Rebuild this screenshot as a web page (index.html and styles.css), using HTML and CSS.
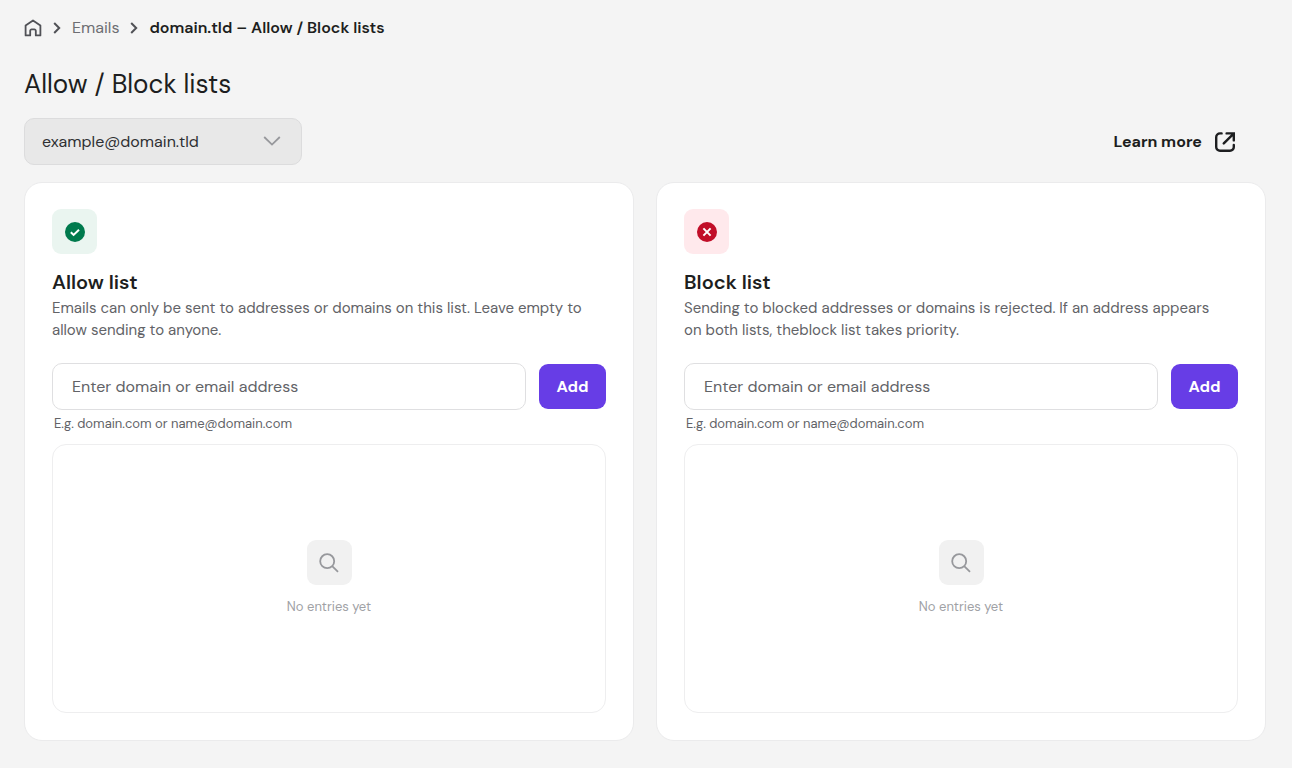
FILE: index.html
```html
<!DOCTYPE html>
<html lang="en">
<head>
    <meta charset="UTF-8">
    <meta name="viewport" content="width=device-width, initial-scale=1.0">
    <title>Allow / Block lists</title>
    <link rel="stylesheet" href="styles.css">
</head>
<body>
    <main class="page">
        <nav class="breadcrumb" aria-label="Breadcrumb">
            <a href="#" class="home" aria-label="Home">
                <svg width="18" height="18" viewBox="0 0 18 18" fill="none" stroke="currentColor" stroke-width="1.8" stroke-linejoin="round">
                    <path d="M1.6 6.6 9 1.4l7.4 5.2V16.4h-4.6v-4.6a1.4 1.4 0 0 0-1.4-1.4H7.6a1.4 1.4 0 0 0-1.4 1.4v4.6H1.6z"/>
                </svg>
            </a>
            <svg class="separator" width="8" height="12" viewBox="0 0 8 12" fill="none" stroke="currentColor" stroke-width="2"><path d="M1.2 1 6.2 6l-5 5"/></svg>
            <a href="#">Emails</a>
            <svg class="separator" width="8" height="12" viewBox="0 0 8 12" fill="none" stroke="currentColor" stroke-width="2"><path d="M1.2 1 6.2 6l-5 5"/></svg>
            <span class="current">domain.tld – Allow / Block lists</span>
        </nav>

        <h1>Allow / Block lists</h1>

        <div class="toolbar">
            <div class="select-box">
                <select aria-label="Email account">
                    <option>example@domain.tld</option>
                </select>
                <svg class="select-arrow" width="18" height="10" viewBox="0 0 18 10" fill="none" stroke="currentColor" stroke-width="1.8"><path d="M1.2 1 9 8.6 16.8 1"/></svg>
            </div>
            <a href="#" class="learn-more">
                Learn more
                <svg width="20" height="20" viewBox="0 0 20 20" fill="none" stroke="currentColor" stroke-width="2.4" stroke-linecap="round">
                    <path d="M6.6 1.4H5a3.8 3.8 0 0 0-3.8 3.8V15A3.8 3.8 0 0 0 5 18.8h10a3.8 3.8 0 0 0 3.8-3.8v-2"/>
                    <path d="M11.6 1.4h7.2v7M18.4 1.8 8.8 11.4"/>
                </svg>
            </a>
        </div>

        <div class="cards">
            <section class="card">
                <div class="icon-box success">
                    <svg width="20" height="20" viewBox="0 0 20 20" fill="none">
                        <circle cx="10" cy="10" r="10" fill="#007a4d"/>
                        <path d="m5.8 10.2 2.8 2.7 5.4-5.2" stroke="#fff" stroke-width="2"/>
                    </svg>
                </div>
                <h2>Allow list</h2>
                <p class="description">Emails can only be sent to addresses or domains on this list. Leave empty to allow sending to anyone.</p>
                <form class="add-form">
                    <input type="text" id="allow-input" placeholder="Enter domain or email address" aria-label="Allow domain or email address" aria-describedby="allow-hint">
                    <button type="button">Add</button>
                </form>
                <p class="hint" id="allow-hint">E.g. domain.com or name@domain.com</p>
                <div class="empty">
                    <div class="icon-box">
                        <svg width="20" height="20" viewBox="0 0 20 20" fill="none" stroke="#97989c" stroke-width="1.8"><circle cx="8.2" cy="8.2" r="7"/><path d="m13.2 13.2 5.8 5.6"/></svg>
                    </div>
                    <p>No entries yet</p>
                </div>
            </section>

            <section class="card">
                <div class="icon-box danger">
                    <svg width="20" height="20" viewBox="0 0 20 20" fill="none">
                        <circle cx="10" cy="10" r="10" fill="#c10e28"/>
                        <path d="m6.4 6.4 7.2 7.2M13.6 6.4l-7.2 7.2" stroke="#fff" stroke-width="2"/>
                    </svg>
                </div>
                <h2>Block list</h2>
                <p class="description">Sending to blocked addresses or domains is rejected. If an address appears on both lists, theblock list takes priority.</p>
                <form class="add-form">
                    <input type="text" id="block-input" placeholder="Enter domain or email address" aria-label="Block domain or email address" aria-describedby="block-hint">
                    <button type="button">Add</button>
                </form>
                <p class="hint" id="block-hint">E.g. domain.com or name@domain.com</p>
                <div class="empty">
                    <div class="icon-box">
                        <svg width="20" height="20" viewBox="0 0 20 20" fill="none" stroke="#97989c" stroke-width="1.8"><circle cx="8.2" cy="8.2" r="7"/><path d="m13.2 13.2 5.8 5.6"/></svg>
                    </div>
                    <p>No entries yet</p>
                </div>
            </section>
        </div>
    </main>
</body>
</html>
```
FILE: styles.css
```css
* {
    box-sizing: border-box;
}
body {
    margin: 0;
    font-family: "DM Sans", Inter, sans-serif;
    font-size: 16px;
    line-height: 22px;
    color: #1d1e20;
    background-color: #f4f4f4;
}
h1, h2, p {
    margin: 0;
}
a {
    color: inherit;
    text-decoration: none;
}
svg {
    display: block;
    flex-shrink: 0;
}
.page {
    padding: 17px 26px 28px 24px;
}
.breadcrumb {
    display: flex;
    align-items: center;
    gap: 11px;
    color: #6d6e73;
}
.breadcrumb .home,
.breadcrumb .separator {
    color: #505156;
}
.breadcrumb .current {
    font-weight: 600;
    color: #1d1e20;
}
h1 {
    margin-top: 27px;
    font-size: 26px;
    line-height: 36px;
    font-weight: 400;
}
.toolbar {
    display: flex;
    align-items: center;
    justify-content: space-between;
    margin: 16px 0 17px;
    padding-right: 31px;
}
.select-box {
    position: relative;
    width: 278px;
}
.select-box select {
    appearance: none;
    width: 100%;
    height: 47px;
    padding: 0 48px 0 17px;
    border: 1px solid #dcdcdd;
    border-radius: 10px;
    background-color: #e8e8e8;
    font: inherit;
    color: #2f3033;
}
.select-arrow {
    position: absolute;
    top: 18px;
    right: 21px;
    color: #97989c;
    pointer-events: none;
}
.learn-more {
    display: flex;
    align-items: center;
    gap: 13px;
    font-weight: 700;
}
.cards {
    display: grid;
    grid-template-columns: 1fr 1fr;
    gap: 22px;
}
.card {
    padding: 26px 27px 27px;
    border: 1px solid #ebebec;
    border-radius: 18px;
    background-color: #fff;
}
.icon-box {
    display: flex;
    align-items: center;
    justify-content: center;
    width: 45px;
    height: 45px;
    border-radius: 9px;
    background-color: #f1f1f1;
}
.icon-box.success {
    background-color: #eaf5f0;
}
.icon-box.danger {
    background-color: #ffe9ec;
}
h2 {
    margin: 14px 0 1px;
    font-size: 20px;
    line-height: 28px;
    font-weight: 600;
}
.description {
    padding-right: 10px;
    font-size: 15px;
    color: #626367;
}
.add-form {
    display: flex;
    align-items: center;
    gap: 13px;
    margin-top: 22px;
}
.add-form input {
    flex: 1;
    min-width: 0;
    height: 47px;
    padding: 0 19px;
    border: 1px solid #dfdfe1;
    border-radius: 10px;
    background-color: #fff;
    font: inherit;
    color: #1d1e20;
}
.add-form input::placeholder {
    color: #626367;
    opacity: 1;
}
.add-form button {
    width: 67px;
    height: 45px;
    border: none;
    border-radius: 9px;
    background-color: #673de6;
    font: inherit;
    font-weight: 700;
    color: #fff;
    cursor: pointer;
}
.hint {
    margin: 4px 2px 10px;
    font-size: 13px;
    line-height: 20px;
    color: #626367;
}
.empty {
    display: flex;
    flex-direction: column;
    align-items: center;
    justify-content: center;
    gap: 12px;
    min-height: 269px;
    border: 1px solid #eeeeef;
    border-radius: 14px;
    font-size: 13px;
    line-height: 20px;
    color: #a0a1a5;
}
```
